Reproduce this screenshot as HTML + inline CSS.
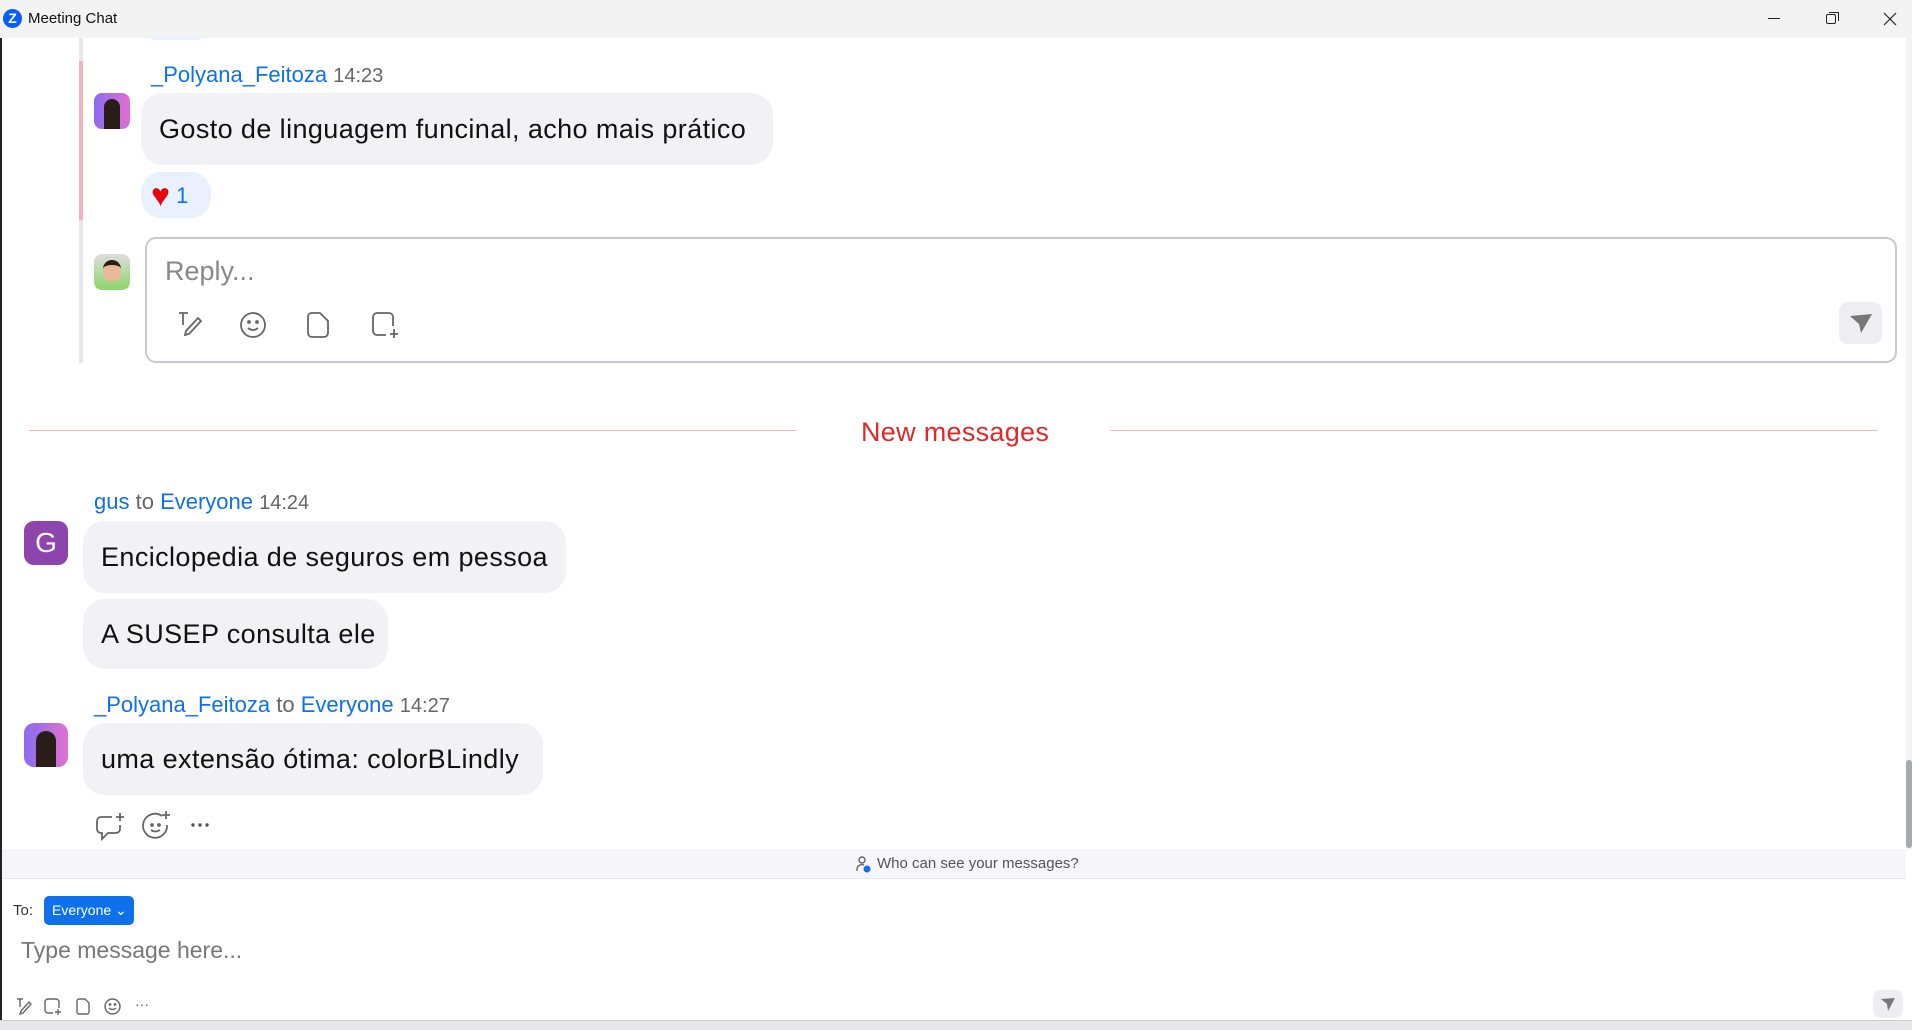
<!DOCTYPE html>
<html><head><meta charset="utf-8"><style>
*{margin:0;padding:0;box-sizing:border-box}
body{width:1912px;height:1030px;overflow:hidden;background:#fff;font-family:"Liberation Sans",sans-serif;position:relative;color:#111}
.a{position:absolute}
.name{color:#0e71eb;font-size:22px;white-space:nowrap}
.name .g{color:#666}
.bub{background:#f2f2f6;border-radius:22px;font-size:27px;letter-spacing:0.4px;color:#111;padding-left:18px;line-height:1;display:flex;align-items:center;white-space:nowrap}
svg{position:absolute;overflow:visible}
</style></head><body>
<div class="a" style="left:0;top:0;width:1912px;height:38px;background:#f3f3f3"></div>
<div class="a" style="left:3px;top:9px;width:19px;height:19px;border-radius:50%;background:#0b5cff;color:#fff;font-weight:bold;font-size:14px;text-align:center;line-height:19px">Z</div>
<div class="a" style="left:28px;top:10px;font-size:15px;color:#111">Meeting Chat</div>
<div class="a" style="left:1768px;top:18px;width:12px;height:1px;background:#222"></div>
<div class="a" style="left:1826px;top:14px;width:10px;height:10px;border:1px solid #222;border-radius:2px"></div>
<div class="a" style="left:1829px;top:12px;width:10px;height:9px;border-top:1px solid #222;border-right:1px solid #222"></div>
<svg style="left:1884px;top:13px" width="12" height="12"><path d="M0 0L12 12M12 0L0 12" stroke="#222" stroke-width="1.2"/></svg>
<div class="a" style="left:0;top:38px;width:2px;height:982px;background:#222"></div>
<div class="a" style="left:1906px;top:38px;width:6px;height:811px;background:#f3f3f6"></div>
<div class="a" style="left:1906px;top:760px;width:6px;height:88px;background:#a8a8b0;border-radius:3px"></div>
<div class="a" style="left:79px;top:38px;width:4px;height:325px;background:#e6e6ec"></div>
<div class="a" style="left:79px;top:61px;width:4px;height:159px;background:#f4b4bc"></div>
<div class="a" style="left:150px;top:36px;width:52px;height:4px;background:#e8f1fd;border-radius:0 0 8px 8px"></div>
<div class="a" style="left:94px;top:93px;width:36px;height:36px;border-radius:8px;background:linear-gradient(90deg,#8a6cf0,#e070d0)"><div style="margin:6px 10px 0;width:16px;height:30px;background:#2a1d18;border-radius:8px 8px 0 0"></div></div>
<div class="a name" style="left:151px;top:62px">_Polyana_Feitoza <span class="g" style="font-size:20px">14:23</span></div>
<div class="a bub" style="left:141px;top:93px;width:632px;height:72px">Gosto de linguagem funcinal, acho mais prático</div>
<div class="a" style="left:141px;top:172px;width:70px;height:46px;background:#e8f1fd;border-radius:20px;font-size:22px;color:#0e71eb;line-height:46px;padding-left:10px"><span style="color:#e8000b;font-size:32px;vertical-align:-3px">♥</span> 1</div>
<div class="a" style="left:94px;top:254px;width:36px;height:36px;border-radius:8px;background:linear-gradient(#ddd,#8bd66a);overflow:hidden"><div style="margin:6px 9px;width:18px;height:22px;background:#e8b89a;border-radius:9px;border-top:5px solid #2a1d18"></div></div>
<div class="a" style="left:145px;top:237px;width:1752px;height:126px;border:2px solid #c9c8d6;border-radius:11px"></div>
<div class="a" style="left:165px;top:256px;font-size:27px;color:#888">Reply...</div>
<svg style="left:178px;top:312px" width="24" height="24" fill="none" stroke="#666" stroke-width="1.8"><path d="M1 1h9M5 1v12M20 6l3 3-12 13-4 1 1-4z"/></svg>
<svg style="left:240px;top:312px" width="26" height="26" fill="none" stroke="#666" stroke-width="1.8"><circle cx="13" cy="13" r="12"/><circle cx="9" cy="10" r="1" fill="#666"/><circle cx="17" cy="10" r="1" fill="#666"/><path d="M8 16q5 4 10 0"/></svg>
<svg style="left:307px;top:312px" width="22" height="26" fill="none" stroke="#666" stroke-width="1.8"><path d="M4 1h9l8 8v12a4 4 0 0 1-4 4H5a4 4 0 0 1-4-4V5a4 4 0 0 1 3-4z"/></svg>
<svg style="left:372px;top:312px" width="28" height="28" fill="none" stroke="#666" stroke-width="1.8"><path d="M14 23H5a4 4 0 0 1-4-4V5a4 4 0 0 1 4-4h12a4 4 0 0 1 4 4v9M22 17v9M18 22h8"/></svg>
<div class="a" style="left:1839px;top:302px;width:43px;height:42px;background:#ededf2;border-radius:9px"></div>
<svg style="left:1849px;top:313px" width="24" height="22"><path d="M1 3L23 1L12 20L10 11Z" fill="#777"/></svg>
<div class="a" style="left:29px;top:430px;width:767px;height:1px;background:#f2b6bd"></div>
<div class="a" style="left:1110px;top:430px;width:768px;height:1px;background:#f2b6bd"></div>
<div class="a" style="left:861px;top:417px;font-size:27px;letter-spacing:0.3px;color:#e02828">New messages</div>
<div class="a name" style="left:94px;top:489px">gus <span class="g">to</span> Everyone <span class="g" style="font-size:20px">14:24</span></div>
<div class="a" style="left:24px;top:521px;width:44px;height:44px;border-radius:10px;background:#8e44ad;color:#fff;font-size:28px;text-align:center;line-height:44px">G</div>
<div class="a bub" style="left:83px;top:521px;width:483px;height:72px">Enciclopedia de seguros em pessoa</div>
<div class="a bub" style="left:83px;top:599px;width:305px;height:70px">A SUSEP consulta ele</div>
<div class="a name" style="left:94px;top:692px">_Polyana_Feitoza <span class="g">to</span> Everyone <span class="g" style="font-size:20px">14:27</span></div>
<div class="a" style="left:24px;top:723px;width:44px;height:44px;border-radius:10px;background:linear-gradient(90deg,#8a6cf0,#e070d0);overflow:hidden"><div style="margin:8px 12px 0;width:20px;height:36px;background:#2a1d18;border-radius:10px 10px 0 0"></div></div>
<div class="a bub" style="left:83px;top:723px;width:460px;height:72px">uma extensão ótima: colorBLindly</div>
<svg style="left:96px;top:812px" width="30" height="28" fill="none" stroke="#666" stroke-width="1.8"><path d="M16 5H5a4 4 0 0 0-4 4v8a4 4 0 0 0 4 4h1v6l6-6h8a4 4 0 0 0 4-4v-4M24 1v8M20 5h8"/></svg>
<svg style="left:142px;top:810px" width="30" height="30" fill="none" stroke="#666" stroke-width="1.8"><path d="M20 6a12 12 0 1 0 5 9"/><circle cx="10" cy="15" r="1" fill="#666"/><circle cx="17" cy="15" r="1" fill="#666"/><path d="M9 20q4 3 9 0M24 1v8M20 5h8"/></svg>
<svg style="left:191px;top:823px" width="20" height="4"><circle cx="2" cy="2" r="1.7" fill="#555"/><circle cx="9" cy="2" r="1.7" fill="#555"/><circle cx="16" cy="2" r="1.7" fill="#555"/></svg>
<div class="a" style="left:2px;top:849px;width:1904px;height:30px;background:#f6f6fa;border-bottom:1px solid #e6e6ec"></div>
<svg style="left:856px;top:856px" width="16" height="18" fill="none" stroke="#666" stroke-width="1.4"><circle cx="6" cy="4" r="3"/><path d="M1 15v-2a5 5 0 0 1 7-4"/><circle cx="11" cy="13" r="3.5" fill="#0e71eb" stroke="none"/></svg>
<div class="a" style="left:877px;top:855px;font-size:15px;color:#555">Who can see your messages?</div>
<div class="a" style="left:13px;top:902px;font-size:15px;color:#333">To:</div>
<div class="a" style="left:44px;top:896px;width:90px;height:29px;background:#0e71eb;border-radius:5px;color:#fff;font-size:14px;line-height:29px;padding-left:8px">Everyone ⌄</div>
<div class="a" style="left:21px;top:937px;font-size:23px;color:#777">Type message here...</div>
<svg style="left:16px;top:998px" width="16" height="16" fill="none" stroke="#666" stroke-width="1.4"><path d="M1 1h6M4 1v8M13 4l2 2-8 9-3 1 1-3z"/></svg>
<svg style="left:44px;top:998px" width="18" height="18" fill="none" stroke="#666" stroke-width="1.4"><path d="M9 15H4a3 3 0 0 1-3-3V4a3 3 0 0 1 3-3h8a3 3 0 0 1 3 3v6M14 11v6M11 14h6"/></svg>
<svg style="left:76px;top:998px" width="14" height="17" fill="none" stroke="#666" stroke-width="1.4"><path d="M3 1h6l4 4v9a2 2 0 0 1-2 2H3a2 2 0 0 1-2-2V3a2 2 0 0 1 2-2z"/></svg>
<svg style="left:104px;top:998px" width="17" height="17" fill="none" stroke="#666" stroke-width="1.4"><circle cx="8.5" cy="8.5" r="7.5"/><path d="M5 10q3.5 3 7 0"/><circle cx="6" cy="6.5" r=".7" fill="#666"/><circle cx="11" cy="6.5" r=".7" fill="#666"/></svg>
<div class="a" style="left:135px;top:996px;font-size:14px;color:#555">···</div>
<div class="a" style="left:1873px;top:990px;width:30px;height:28px;background:#ededf2;border-radius:7px"></div>
<svg style="left:1880px;top:997px" width="16" height="15"><path d="M1 2L15 1L8 14L7 7Z" fill="#777"/></svg>
<div class="a" style="left:0;top:1020px;width:1912px;height:10px;background:#e8e8ea;border-top:1px solid #ccc"></div>
</body></html>
